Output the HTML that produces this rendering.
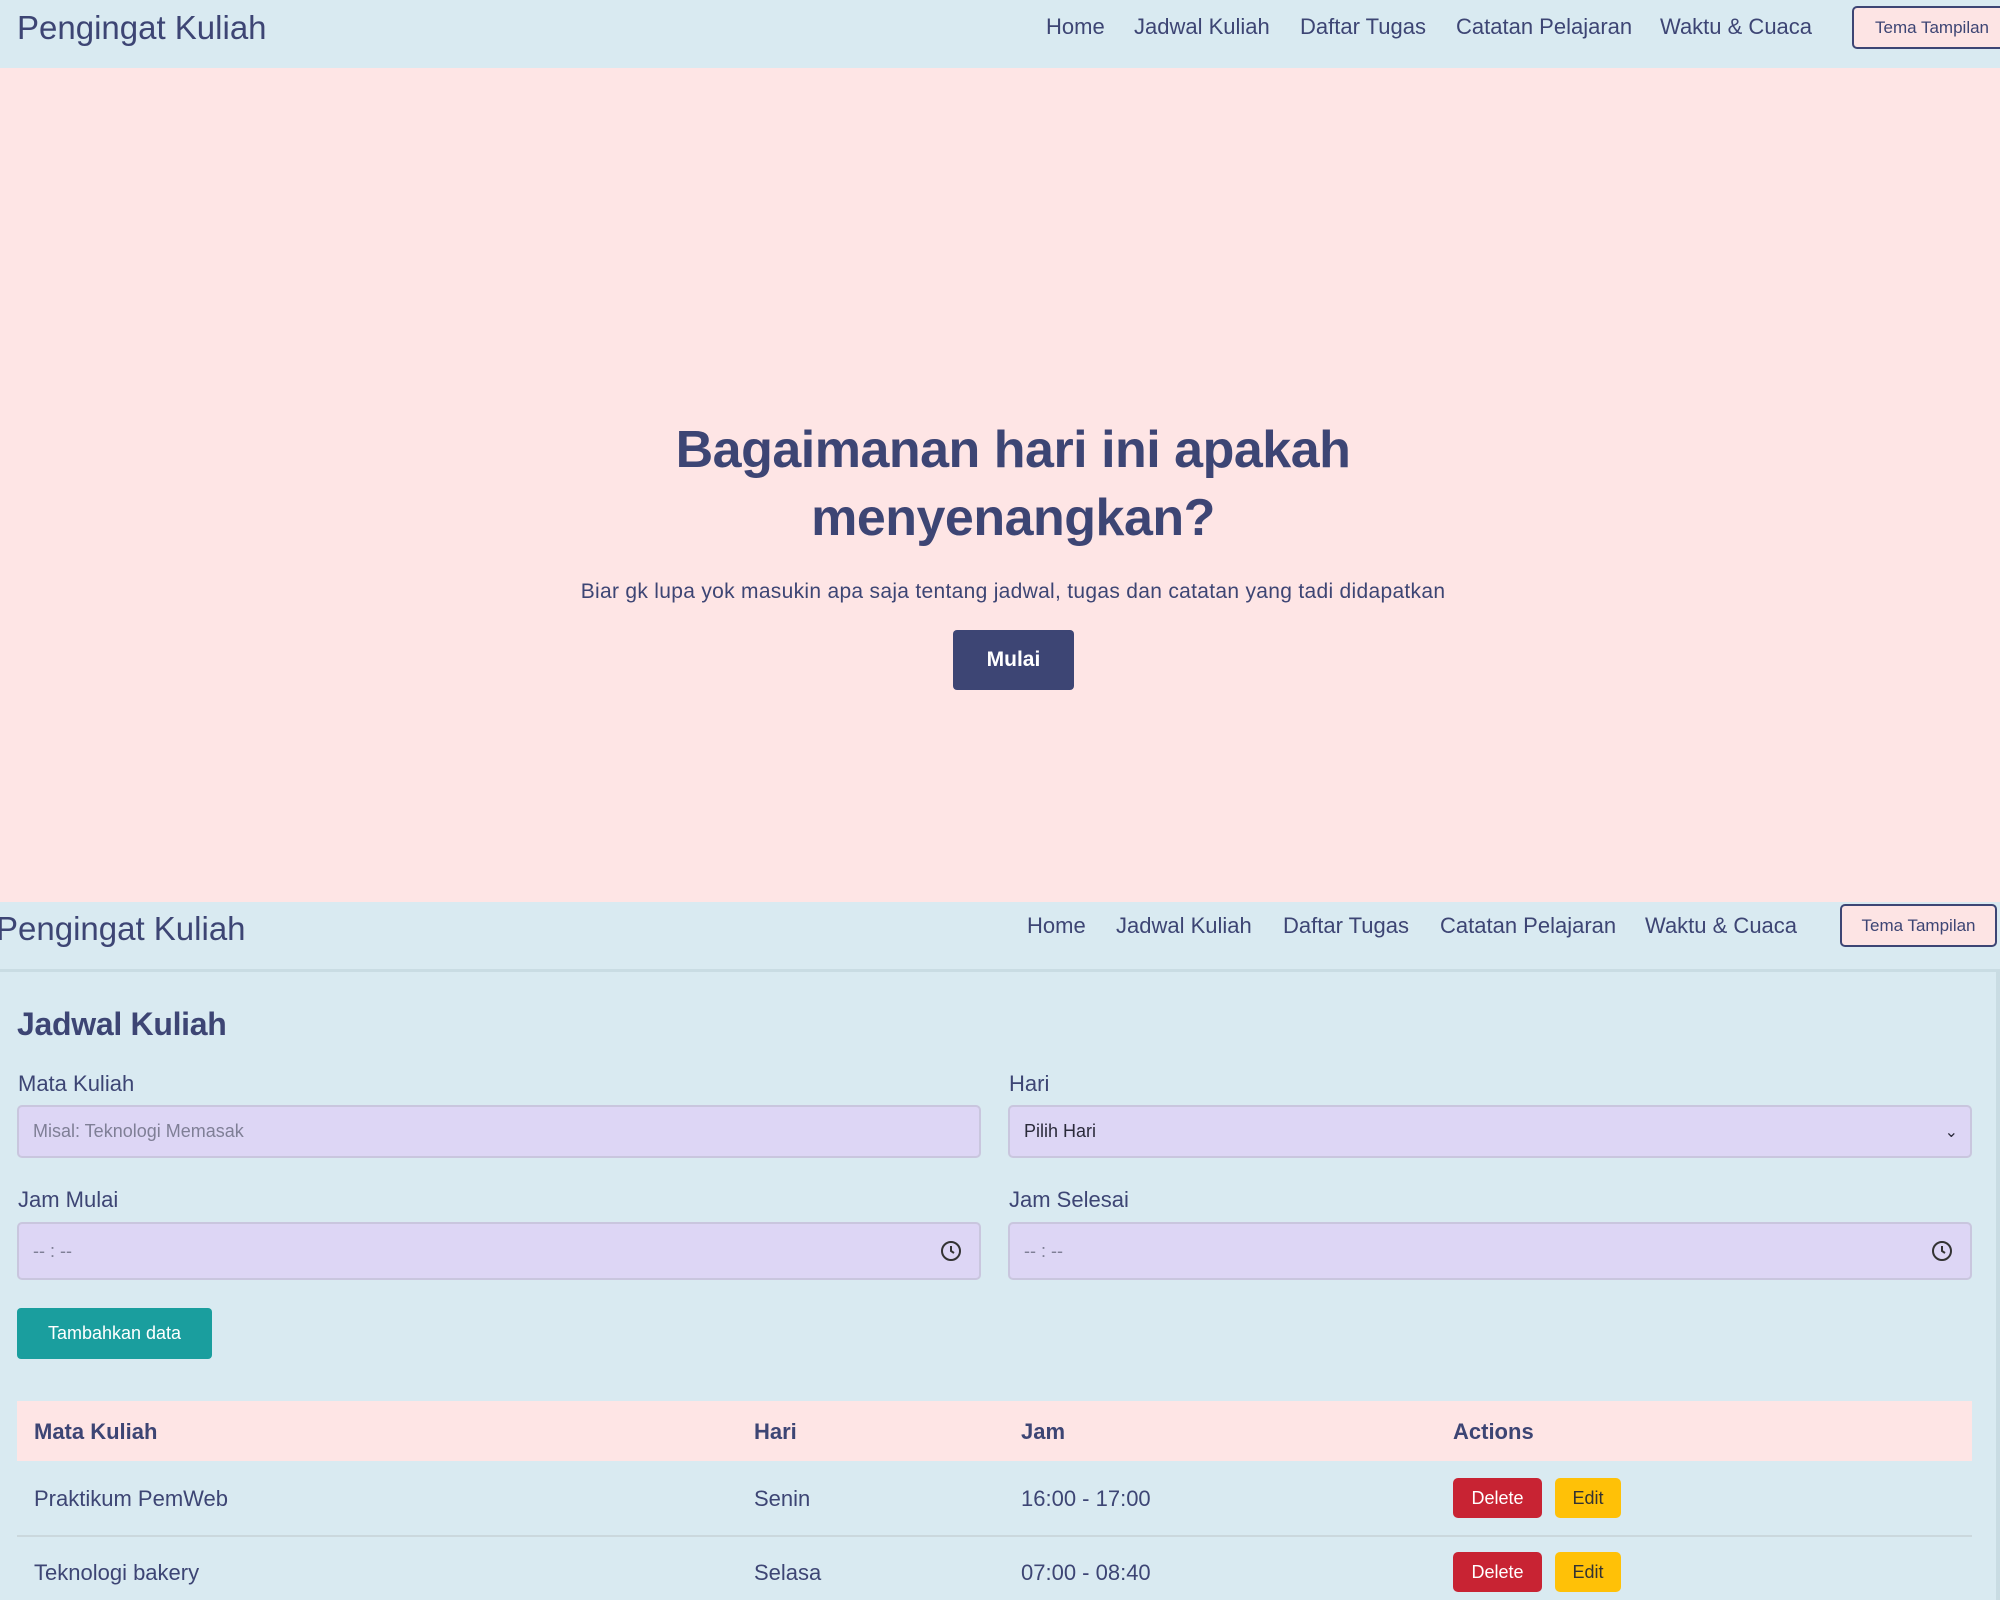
<!DOCTYPE html>
<html><head><meta charset="utf-8"><style>
*{box-sizing:border-box;margin:0;padding:0}
body{width:2000px;height:1600px;overflow:hidden;background:#d9eaf1;font-family:"Liberation Sans",sans-serif;color:#3d4574;position:relative}
.a{position:absolute;white-space:nowrap}
.nav{position:absolute;left:0;width:2000px;height:68px;background:#d9eaf1}
.brand{font-size:33px;line-height:1}
.link{font-size:22px;line-height:1}
.tbtn{position:absolute;border:2px solid #3d4574;border-radius:5px;background:#fde4e4;font-size:17px;display:flex;align-items:center;justify-content:center}
.lbl{font-size:22px;line-height:1}
.inp{position:absolute;background:#ddd6f5;border:2px solid #c9c6de;border-radius:5px;font-size:18px;display:flex;align-items:center;padding-left:14px;color:#7f7f96}
.th{font-size:22px;font-weight:bold;line-height:1}
.td{font-size:22px;line-height:1}
.del{position:absolute;background:#c82333;color:#fff;border-radius:5px;font-size:18px;display:flex;align-items:center;justify-content:center}
.edt{position:absolute;background:#ffc107;color:#333;border-radius:5px;font-size:18px;display:flex;align-items:center;justify-content:center}
</style></head><body>
<div class="nav" style="top:0">
<div class="a brand" style="left:17px;top:11px">Pengingat Kuliah</div>
<div class="a link" style="left:1046px;top:16px">Home</div>
<div class="a link" style="left:1134px;top:16px">Jadwal Kuliah</div>
<div class="a link" style="left:1300px;top:16px">Daftar Tugas</div>
<div class="a link" style="left:1456px;top:16px">Catatan Pelajaran</div>
<div class="a link" style="left:1660px;top:16px">Waktu &amp; Cuaca</div>
<div class="tbtn" style="left:1852px;top:6px;width:160px;height:43px">Tema Tampilan</div>
</div>
<div class="a" style="left:0;top:68px;width:2000px;height:834px;background:#fee5e5"></div>
<div class="a" style="left:0;top:416px;width:2026px;text-align:center;font-size:52px;font-weight:bold;line-height:68px;letter-spacing:-0.5px">Bagaimanan hari ini apakah<br>menyenangkan?</div>
<div class="a" style="left:0;top:580px;width:2026px;text-align:center;font-size:21px;letter-spacing:0.3px">Biar gk lupa yok masukin apa saja tentang jadwal, tugas dan catatan yang tadi didapatkan</div>
<div class="a" style="left:953px;top:630px;width:121px;height:60px;background:#3d4574;color:#fff;border-radius:4px;font-size:21px;font-weight:bold;display:flex;align-items:center;justify-content:center">Mulai</div>
<div class="nav" style="top:902px;height:68px">
<div class="a brand" style="left:-4px;top:10px">Pengingat Kuliah</div>
<div class="a link" style="left:1027px;top:13px">Home</div>
<div class="a link" style="left:1116px;top:13px">Jadwal Kuliah</div>
<div class="a link" style="left:1283px;top:13px">Daftar Tugas</div>
<div class="a link" style="left:1440px;top:13px">Catatan Pelajaran</div>
<div class="a link" style="left:1645px;top:13px">Waktu &amp; Cuaca</div>
<div class="tbtn" style="left:1840px;top:2px;width:157px;height:43px">Tema Tampilan</div>
</div>
<div class="a" style="left:0;top:969px;width:2000px;height:3px;background:#c9dce3"></div>
<div class="a" style="left:1996px;top:972px;width:4px;height:628px;background:#c9dce3"></div>
<div class="a" style="left:17px;top:1006px;font-size:32px;font-weight:bold;letter-spacing:-0.3px">Jadwal Kuliah</div>
<div class="a lbl" style="left:18px;top:1073px">Mata Kuliah</div>
<div class="a lbl" style="left:1009px;top:1073px">Hari</div>
<div class="inp" style="left:17px;top:1105px;width:964px;height:53px">Misal: Teknologi Memasak</div>
<div class="inp" style="left:1008px;top:1105px;width:964px;height:53px;color:#2a2a3a">Pilih Hari<span style="position:absolute;right:12px;font-size:16px">&#8964;</span></div>
<div class="a lbl" style="left:18px;top:1189px">Jam Mulai</div>
<div class="a lbl" style="left:1009px;top:1189px">Jam Selesai</div>
<div class="inp" style="left:17px;top:1222px;width:964px;height:58px">-- : --<svg style="position:absolute;right:16px" width="24" height="24" viewBox="0 0 24 24"><circle cx="12" cy="12" r="9" fill="none" stroke="#333" stroke-width="2"/><path d="M12 7v5l3 2" fill="none" stroke="#333" stroke-width="2"/></svg></div>
<div class="inp" style="left:1008px;top:1222px;width:964px;height:58px">-- : --<svg style="position:absolute;right:16px" width="24" height="24" viewBox="0 0 24 24"><circle cx="12" cy="12" r="9" fill="none" stroke="#333" stroke-width="2"/><path d="M12 7v5l3 2" fill="none" stroke="#333" stroke-width="2"/></svg></div>
<div class="a" style="left:17px;top:1308px;width:195px;height:51px;background:#1a9e9e;color:#fff;border-radius:4px;font-size:18px;display:flex;align-items:center;justify-content:center">Tambahkan data</div>
<div class="a" style="left:17px;top:1401px;width:1955px;height:60px;background:#fee5e5"></div>
<div class="a th" style="left:34px;top:1421px">Mata Kuliah</div>
<div class="a th" style="left:754px;top:1421px">Hari</div>
<div class="a th" style="left:1021px;top:1421px">Jam</div>
<div class="a th" style="left:1453px;top:1421px">Actions</div>
<div class="a td" style="left:34px;top:1488px">Praktikum PemWeb</div>
<div class="a td" style="left:754px;top:1488px">Senin</div>
<div class="a td" style="left:1021px;top:1488px">16:00 - 17:00</div>
<div class="del" style="left:1453px;top:1478px;width:89px;height:40px">Delete</div>
<div class="edt" style="left:1555px;top:1478px;width:66px;height:40px">Edit</div>
<div class="a" style="left:17px;top:1535px;width:1955px;height:2px;background:#cbd8dd"></div>
<div class="a td" style="left:34px;top:1562px">Teknologi bakery</div>
<div class="a td" style="left:754px;top:1562px">Selasa</div>
<div class="a td" style="left:1021px;top:1562px">07:00 - 08:40</div>
<div class="del" style="left:1453px;top:1552px;width:89px;height:40px">Delete</div>
<div class="edt" style="left:1555px;top:1552px;width:66px;height:40px">Edit</div>
</body></html>
